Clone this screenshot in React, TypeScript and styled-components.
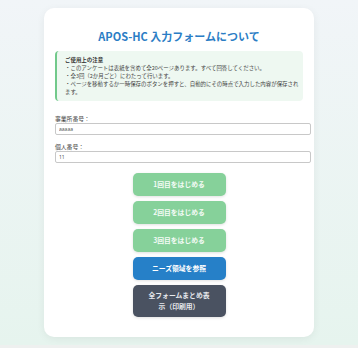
import React from 'react';
import styled, { createGlobalStyle } from 'styled-components';

const GlobalStyle = createGlobalStyle`
  html {
    background: #eef0ef;
  }
  body {
    margin: 0;
    font-family: "Noto Sans CJK JP", "Noto Sans", sans-serif;
    color: #333;
  }
`;

const Page = styled.div`
  padding: 8px 0;
  background: linear-gradient(180deg, #f1f5f8 0%, #e6f4ee 100%);
  box-shadow: 0 1px 1px rgba(0, 0, 0, 0.06);
`;

const Card = styled.div`
  width: 270px;
  margin: 0 auto;
  box-sizing: border-box;
  padding: 20px 11px 20px;
  background: #fff;
  border-radius: 10px;
  box-shadow: 0 2px 8px rgba(0, 0, 0, 0.06);
`;

const Title = styled.h1`
  margin: 0 0 7px;
  text-align: center;
  font-size: 11px;
  line-height: 16px;
  font-weight: 700;
  color: #2b7dc5;
`;

const Notice = styled.div`
  background: #eef8f1;
  border-left: 2px solid #72c98b;
  border-radius: 4px;
  padding: 5px 0 5px 8px;
  font-size: 5.45px;
  line-height: 8px;
  color: #444;
`;

const NoticeTitle = styled.div`
  font-weight: 700;
  color: #333;
`;

const Field = styled.div<{ $gap: number }>`
  margin-top: ${(p) => p.$gap}px;
`;

const Label = styled.label`
  display: block;
  font-size: 5.8px;
  line-height: 8px;
  color: #444;
`;

const Input = styled.input`
  display: block;
  width: 100%;
  height: 10px;
  margin: 0;
  padding: 0 3px;
  border: 1px solid #c8c8c8;
  border-radius: 2px;
  font-family: "Noto Sans", sans-serif;
  font-size: 5px;
  color: #555;
  background: #fff;
  outline: none;
`;

const Actions = styled.div`
  display: flex;
  flex-direction: column;
  align-items: center;
  gap: 5px;
  margin-top: 10px;
`;

const Button = styled.button<{ $tone: 'green' | 'blue' | 'dark' }>`
  width: 93px;
  min-height: 23px;
  padding: 5px 14px;
  border: none;
  border-radius: 5px;
  font-family: "Noto Sans CJK JP", sans-serif;
  font-size: 6.8px;
  line-height: 11px;
  font-weight: 700;
  cursor: pointer;
  box-shadow: 0 1px 3px rgba(0, 0, 0, 0.12);
  background: ${(p) =>
    p.$tone === 'green' ? '#86d19a' : p.$tone === 'blue' ? '#2680c8' : '#4a5261'};
  color: ${(p) => (p.$tone === 'green' ? '#f4fbf6' : p.$tone === 'dark' ? '#e6e8ec' : '#fff')};
`;

export default function App() {
  return (
    <>
      <GlobalStyle />
      <Page>
        <Card>
          <Title>APOS-HC 入力フォームについて</Title>
          <Notice>
            <NoticeTitle>ご使用上の注意</NoticeTitle>
            <div>・このアンケートは表紙を含めて全20ページあります。すべて回答してください。</div>
            <div>・全3回（2か月ごと）にわたって行います。</div>
            <div>・ページを移動するか一時保存のボタンを押すと、自動的にその時点で入力した内容が保存されます。</div>
          </Notice>
          <Field $gap={14}>
            <Label>事業所番号：</Label>
            <Input defaultValue="aaaaa" />
          </Field>
          <Field $gap={8}>
            <Label>個人番号：</Label>
            <Input defaultValue="11" />
          </Field>
          <Actions>
            <Button $tone="green">1回目をはじめる</Button>
            <Button $tone="green">2回目をはじめる</Button>
            <Button $tone="green">3回目をはじめる</Button>
            <Button $tone="blue">ニーズ領域を参照</Button>
            <Button $tone="dark">全フォームまとめ表示（印刷用）</Button>
          </Actions>
        </Card>
      </Page>
    </>
  );
}
